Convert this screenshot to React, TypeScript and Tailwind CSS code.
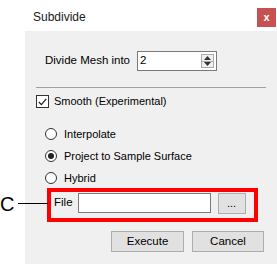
import React from "react";

function Radio({ checked, label }: { checked?: boolean; label: string }) {
  return (
    <div className="flex h-[12px] items-center">
      <span className="flex h-[12px] w-[12px] items-center justify-center rounded-full border border-[#333] bg-white">
        {checked && <span className="h-[6px] w-[6px] rounded-full bg-[#222]" />}
      </span>
      <span className="ml-[7px] leading-none">{label}</span>
    </div>
  );
}

function Button({ children, className }: { children: React.ReactNode; className?: string }) {
  return (
    <div
      className={
        "flex h-[21px] items-center justify-center border border-[#adadad] bg-[#e1e1e1] " + (className ?? "")
      }
    >
      {children}
    </div>
  );
}

export default function App() {
  return (
    <div className="relative flex h-[264px] w-[277px] flex-col overflow-hidden bg-white pl-[25px] font-['Liberation_Sans',Arial,sans-serif] text-[11px] text-black">
      {/* title bar */}
      <div className="flex h-[31px] justify-between">
        <span className="ml-[8px] mt-[8px] text-[12px] text-[#1a1a1a]">Subdivide</span>
        <div className="mr-[1px] mt-[8px] flex h-[19px] w-[19px] items-center justify-center bg-[#c75050] text-[11px] font-bold leading-none text-white">
          x
        </div>
      </div>

      {/* body */}
      <div className="flex flex-1 flex-col bg-[#f0f0f0]">
        <div className="mt-[20px] flex h-[20px] items-center pl-[20px]">
          <span className="w-[92px] text-[11.5px]">Divide Mesh into</span>
          <div className="flex h-[20px] w-[80px] items-center justify-between border border-[#7a7a7a] bg-white pl-[2px] pr-[2px]">
            <span className="text-[11.5px]">2</span>
            <div className="flex h-[14px] w-[13px] flex-col border border-[#acacac] bg-[#f0f0f0]">
              <div className="flex flex-1 items-center justify-center border-b border-[#acacac]">
                <svg width="7" height="4" viewBox="0 0 7 4">
                  <path d="M0 4 L3.5 0 L7 4 Z" fill="#333" />
                </svg>
              </div>
              <div className="flex flex-1 items-center justify-center">
                <svg width="7" height="4" viewBox="0 0 7 4">
                  <path d="M0 0 L3.5 4 L7 0 Z" fill="#333" />
                </svg>
              </div>
            </div>
          </div>
        </div>

        <div className="mx-[11px] mt-[16px] h-px bg-[#a0a0a0]" />

        <div className="mt-[7px] flex h-[13px] items-center pl-[11px]">
          <span className="flex h-[13px] w-[13px] items-center justify-center border border-[#333] bg-white">
            <svg width="9" height="8" viewBox="0 0 9 8">
              <path d="M0.8 4 L3.4 6.6 L8.2 0.8" fill="none" stroke="#222" strokeWidth="1.3" />
            </svg>
          </span>
          <span className="ml-[5px] leading-none">Smooth (Experimental)</span>
        </div>

        <div className="mt-[20px] flex flex-col gap-[10px] pl-[20px]">
          <Radio label="Interpolate" />
          <Radio checked label="Project to Sample Surface" />
          <Radio label="Hybrid" />
        </div>

        <div className="ml-[22px] mt-[4px] flex h-[34px] w-[211px] items-start border-4 border-[#ff0000] pl-[3px] pt-[1px]">
          <span className="flex h-[20px] items-center text-[11.5px]">File</span>
          <div className="ml-[5px] h-[20px] w-[133px] border border-[#7a7a7a] bg-white" />
          <Button className="ml-[7px] h-[20px] w-[28px]">...</Button>
        </div>

        <div className="ml-[86px] mt-[9px] flex gap-[8px] text-[11.5px]">
          <Button className="w-[73px]">Execute</Button>
          <Button className="w-[72px]">Cancel</Button>
        </div>
      </div>

      {/* callout label */}
      <div className="absolute left-0 top-[193px] flex h-[21px] items-center">
        <span className="text-[20px] leading-none">C</span>
        <span className="ml-[4px] h-px w-[30px] bg-black" />
      </div>
    </div>
  );
}
